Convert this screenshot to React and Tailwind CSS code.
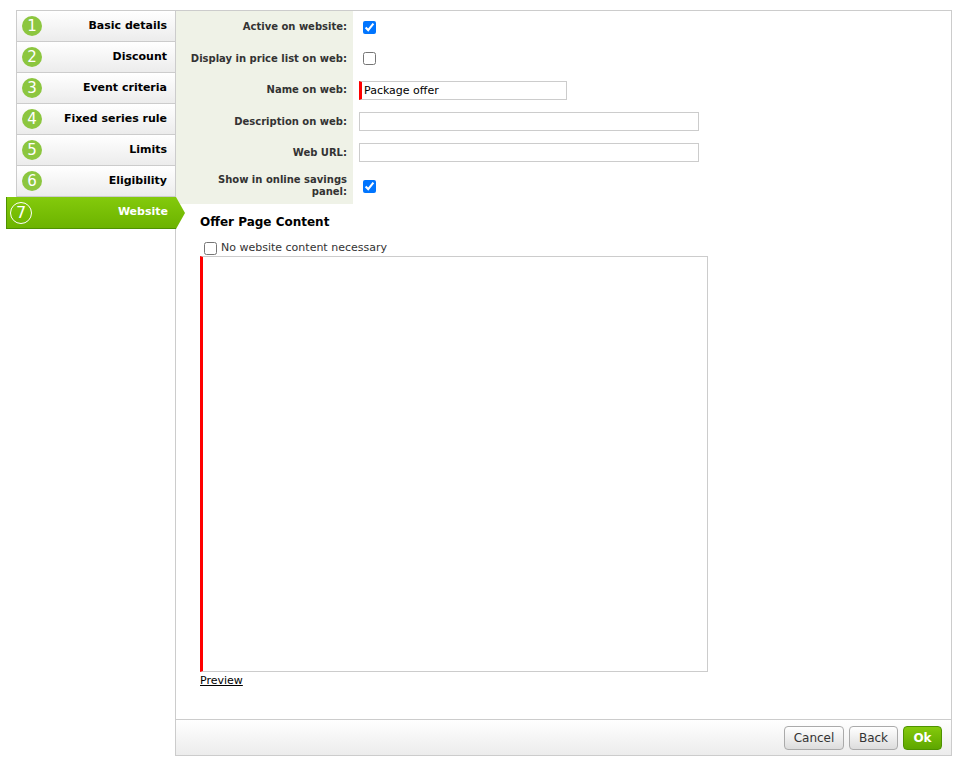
import React from 'react';

const steps = [
    { n: 1, label: 'Basic details' },
    { n: 2, label: 'Discount' },
    { n: 3, label: 'Event criteria' },
    { n: 4, label: 'Fixed series rule' },
    { n: 5, label: 'Limits' },
    { n: 6, label: 'Eligibility' },
];

const font = { fontFamily: '"DejaVu Sans", Verdana, sans-serif' };

const Label = ({ children, className = '' }) => (
    <div className={`bg-[#eff2e7] flex items-center justify-end pr-[6px] text-right text-[10px] font-bold text-[#333] leading-[12px] ${className}`}>
        {children}
    </div>
);

const Field = ({ children, className = '' }) => (
    <div className={`flex items-center pl-[6px] ${className}`}>{children}</div>
);

const Sidebar = () => (
    <div className="w-[175px] shrink-0 relative z-10">
        {steps.map((s, i) => (
            <div
                key={s.n}
                className={`ml-[16px] flex items-center justify-between pl-[5px] pr-[8px] border-l border-b border-[#cccccc] bg-gradient-to-b from-white to-[#ececec] ${i === 0 ? 'border-t h-[32px]' : 'h-[31px]'}`}
            >
                <span className="w-[20px] h-[20px] rounded-full bg-[#8cc63f] text-white text-[15px] leading-[20px] text-center">
                    {s.n}
                </span>
                <span className="text-[11px] font-bold text-black">{s.label}</span>
            </div>
        ))}
        <div className="ml-[6px] w-[179px] h-[32px] flex items-center justify-between pl-[3px] pr-[17px] border-l border-b border-[#4e9200] bg-gradient-to-b from-[#84ca0c] to-[#6cb300] [clip-path:polygon(0_0,170px_0,179px_50%,170px_100%,0_100%)]">
            <span className="w-[22px] h-[22px] rounded-full border-[1.5px] border-white text-white text-[16px] leading-[19px] text-center">
                7
            </span>
            <span className="text-[11px] font-bold text-white">Website</span>
        </div>
    </div>
);

const App = () => {
    return (
        <div className="pt-[10px] flex bg-white min-h-screen" style={font}>
            <Sidebar />

            <div className="flex-1 mr-[4px] h-[746px] border border-[#cccccc] flex flex-col">
                <div className="flex-1">
                    {/* Web settings form */}
                    <div className="grid grid-cols-[177px_1fr]">
                        <Label className="h-[32px]">Active on website:</Label>
                        <Field>
                            <input type="checkbox" defaultChecked className="ml-[4px] w-[13px] h-[13px]" />
                        </Field>

                        <Label className="h-[31px]">Display in price list on web:</Label>
                        <Field>
                            <input type="checkbox" className="ml-[4px] w-[13px] h-[13px]" />
                        </Field>

                        <Label className="h-[32px]">Name on web:</Label>
                        <Field>
                            <input
                                type="text"
                                defaultValue="Package offer"
                                className="w-[208px] h-[19px] border border-[#cccccc] border-l-[3px] border-l-[#ff0000] px-[2px] text-[11px] text-black outline-none"
                            />
                        </Field>

                        <Label className="h-[31px]">Description on web:</Label>
                        <Field>
                            <input type="text" className="w-[340px] h-[19px] border border-[#cccccc] px-[3px] text-[11px] outline-none" />
                        </Field>

                        <Label className="h-[31px]">Web URL:</Label>
                        <Field>
                            <input type="text" className="w-[340px] h-[19px] border border-[#cccccc] px-[3px] text-[11px] outline-none" />
                        </Field>

                        <Label className="h-[36px]">
                            <span>
                                Show in online savings
                                <br />
                                panel:
                            </span>
                        </Label>
                        <Field>
                            <input type="checkbox" defaultChecked className="ml-[4px] w-[13px] h-[13px]" />
                        </Field>
                    </div>

                    {/* Offer page content */}
                    <div className="pl-[24px] pt-[10px]">
                        <h3 className="text-[12px] font-bold text-black leading-[16px]">Offer Page Content</h3>
                        <label className="flex items-center mt-[10px] h-[16px]">
                            <input type="checkbox" className="ml-[4px] w-[13px] h-[13px]" />
                            <span className="ml-[4px] text-[11px] text-[#333]">No website content necessary</span>
                        </label>
                        <div className="w-[508px] h-[416px] border border-[#cccccc] border-l-[3px] border-l-[#ff0000] bg-white" />
                        <a href="#" className="block text-[11px] text-black underline leading-[16px] mt-[1px] w-fit">
                            Preview
                        </a>
                    </div>
                </div>

                {/* Footer buttons */}
                <div className="h-[36px] border-t border-[#cccccc] bg-gradient-to-b from-white to-[#ececec] flex items-center justify-end gap-[5px] pr-[9px]">
                    <button className="h-[24px] w-[60px] rounded-[4px] border border-[#aaaaaa] bg-gradient-to-b from-white to-[#dddddd] text-[12px] text-[#333]">
                        Cancel
                    </button>
                    <button className="h-[24px] w-[49px] rounded-[4px] border border-[#aaaaaa] bg-gradient-to-b from-white to-[#dddddd] text-[12px] text-[#333]">
                        Back
                    </button>
                    <button className="h-[24px] w-[39px] rounded-[4px] border border-[#4e9200] bg-gradient-to-b from-[#84ca0c] to-[#5ea600] text-[12px] font-bold text-white">
                        Ok
                    </button>
                </div>
            </div>
        </div>
    );
};

export default App;
